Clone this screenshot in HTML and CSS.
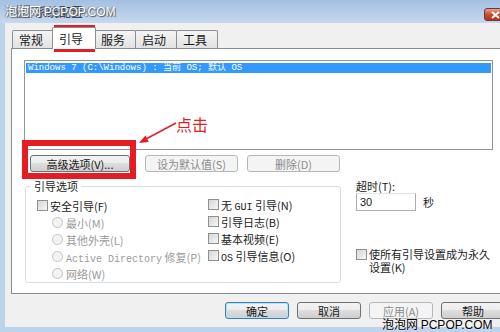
FILE: index.html
```html
<!DOCTYPE html>
<html lang="zh-CN">
<head>
    <meta charset="UTF-8">
    <title>系统配置</title>
    <link rel="stylesheet" href="styles.css">
</head>
<body>
    <div class="window">
        <div class="titlebar">
            <span class="app-icon"></span>
            <span class="title">系统配置</span>
            <span class="close">
                <svg width="9" height="8" viewBox="0 0 9 8"><path d="M1 1 L8 7 M8 1 L1 7" stroke="#fff" stroke-width="2"/></svg>
            </span>
        </div>
        <div class="frame">
            <div class="tabs">
                <div class="tab">常规</div>
                <div class="tab active">引导</div>
                <div class="tab">服务</div>
                <div class="tab">启动</div>
                <div class="tab">工具</div>
            </div>
            <div class="panel">
                <div class="listbox">
                    <div class="item selected">Windows 7 (C:\Windows) : 当前 OS; 默认 OS</div>
                </div>
                <div class="btn-row">
                    <button class="btn advanced">高级选项(<u>V</u>)...</button>
                    <button class="btn set-default" disabled>设为默认值(<u>S</u>)</button>
                    <button class="btn delete" disabled>删除(<u>D</u>)</button>
                </div>
                <div class="options">
                    <fieldset class="group">
                        <legend>引导选项</legend>
                        <div class="group-cols">
                            <div class="col col-left">
                                <div class="row"><span class="box"></span><span>安全引导(<u>F</u>)</span></div>
                                <div class="row sub off"><span class="dot"></span><span>最小(<u>M</u>)</span></div>
                                <div class="row sub off"><span class="dot"></span><span>其他外壳(<u>L</u>)</span></div>
                                <div class="row sub off"><span class="dot"></span><span><span class="mono">Active Directory</span> 修复(<u>P</u>)</span></div>
                                <div class="row sub off"><span class="dot"></span><span>网络(<u>W</u>)</span></div>
                            </div>
                            <div class="col col-right">
                                <div class="row"><span class="box"></span><span>无 <span class="mono">GUI</span> 引导(<u>N</u>)</span></div>
                                <div class="row"><span class="box"></span><span>引导日志(<u>B</u>)</span></div>
                                <div class="row"><span class="box"></span><span>基本视频(<u>E</u>)</span></div>
                                <div class="row"><span class="box"></span><span><span class="mono">OS</span> 引导信息(<u>O</u>)</span></div>
                            </div>
                        </div>
                    </fieldset>
                    <div class="side">
                        <div class="timeout-label">超时(<u>T</u>):</div>
                        <div class="timeout">
                            <span class="input">30</span>
                            <span>秒</span>
                        </div>
                        <div class="permanent">
                            <span class="box"></span>
                            <span>使所有引导设置成为永久<br>设置(<u>K</u>)</span>
                        </div>
                    </div>
                </div>
            </div>
            <div class="footer">
                <button class="btn ok">确定</button>
                <button class="btn">取消</button>
                <button class="btn" disabled>应用(<u>A</u>)</button>
                <button class="btn">帮助</button>
            </div>
        </div>

        <div class="mark mark-top">泡泡网 <span class="latin">PCPOP.COM</span></div>
        <div class="mark mark-bottom">泡泡网 <span class="latin">PCPOP.COM</span></div>

        <div class="hl hl-tab"></div>
        <div class="hl hl-btn"></div>
        <svg class="arrow" width="500" height="332" viewBox="0 0 500 332">
            <line x1="176" y1="123" x2="146" y2="139" stroke="#e51c23" stroke-width="1.5"/>
            <polygon points="139,143 145.4,135.5 148.8,142" fill="#e51c23"/>
        </svg>
        <div class="note">点击</div>
    </div>
</body>
</html>
```

FILE: styles.css
```css
body {
    margin: 0;
    font-family: "Noto Sans CJK SC", sans-serif;
    font-size: 11px;
    color: #1b1b1b;
}
.window {
    position: relative;
    width: 500px;
    height: 332px;
    overflow: hidden;
    display: flex;
    flex-direction: column;
    background: #f0f0f0;
}
.titlebar {
    height: 23px;
    flex: none;
    display: flex;
    align-items: center;
    padding-left: 17px;
    background: linear-gradient(#a4c0e1, #c5d9ef);
}
.app-icon {
    width: 11px;
    height: 11px;
    border: 1px solid #6b7f96;
    background: linear-gradient(#dfe8f2, #8fa6c0);
}
.title {
    margin-left: 5px;
    font-size: 12px;
    line-height: 14px;
    color: #1e2a3a;
}
.close {
    margin-left: auto;
    margin-right: -12px;
    align-self: flex-start;
    margin-top: 8px;
    width: 28px;
    height: 13px;
    display: flex;
    align-items: center;
    padding-left: 6px;
    box-sizing: border-box;
    border: 1px solid #6d3a35;
    border-radius: 3px;
    background: linear-gradient(#e7a293, #cc4b35 50%, #b7321d);
}
.frame {
    flex: 1;
    min-height: 0;
    display: flex;
    flex-direction: column;
    border-left: 5px solid #bcd3ec;
    border-bottom: 5px solid #bcd3ec;
}
.tabs {
    height: 25px;
    flex: none;
    display: flex;
    align-items: flex-end;
    padding-left: 7px;
}
.tab {
    width: 42px;
    height: 18px;
    box-sizing: border-box;
    margin-right: -1px;
    padding-left: 6px;
    border: 1px solid #8c8e94;
    border-bottom: none;
    border-radius: 2px 2px 0 0;
    background: linear-gradient(#f4f4f4, #e2e2e2);
    font-size: 12px;
    line-height: 17px;
}
.tab.active {
    position: relative;
    z-index: 1;
    width: 44px;
    height: 22px;
    margin: 0 -2px -1px -1px;
    background: #fff;
    padding-top: 2px;
}
.panel {
    flex: none;
    height: 246px;
    box-sizing: border-box;
    margin-left: 6px;
    margin-right: -30px;
    border: 1px solid #898c95;
    background: #fff;
}
.listbox {
    width: 469px;
    height: 90px;
    box-sizing: border-box;
    margin: 11px 0 0 12px;
    padding: 2px 1px 0 1px;
    border: 1px solid #8f939a;
}
.item {
    height: 10px;
    line-height: 10px;
    padding-left: 2px;
    font-family: "Liberation Mono", "Noto Sans CJK SC", monospace;
    font-size: 9px;
    white-space: nowrap;
}
.item.selected {
    background: #3399ff;
    color: #fff;
}
.btn-row {
    display: flex;
    margin: 5px 0 0 18px;
}
.btn {
    height: 17px;
    padding: 0;
    box-sizing: border-box;
    border: 1px solid #707070;
    border-radius: 3px;
    background: linear-gradient(#f3f3f3, #ececec 50%, #dddddd 50%, #cfcfcf);
    font-family: "Noto Sans CJK SC", sans-serif;
    font-size: 11px;
    line-height: 14px;
    color: #1b1b1b;
}
.btn:disabled {
    border-color: #b4b8bb;
    background: #f4f4f4;
    color: #8a8a8a;
}
.btn u {
    text-decoration: none;
}
.advanced {
    width: 100px;
}
.set-default {
    width: 93px;
    margin-left: 15px;
}
.delete {
    width: 93px;
    margin-left: 9px;
}
.options {
    display: flex;
    margin: 7px 0 0 13px;
}
.group {
    width: 316px;
    height: 104px;
    box-sizing: border-box;
    margin: 0;
    padding: 0 0 0 5px;
    border: 1px solid #d5dfe5;
    border-radius: 3px;
}
.group legend {
    padding: 0 3px;
    line-height: 14px;
}
.group-cols {
    display: flex;
    margin-top: 4px;
}
.col-left {
    width: 171px;
    margin-left: 6px;
}
.col-right {
    margin-top: -1px;
}
.row {
    height: 17px;
    display: flex;
    align-items: center;
    white-space: nowrap;
}
.row u, .side u {
    text-decoration: none;
}
.sub {
    padding-left: 15px;
}
.off {
    color: #9a9a9a;
}
.mono {
    font-family: "Liberation Mono", monospace;
    font-size: 10px;
}
.box {
    width: 11px;
    height: 11px;
    box-sizing: border-box;
    flex: none;
    margin-right: 2px;
    border: 1px solid #8e8f8f;
    background: linear-gradient(135deg, #d6d6d6, #f7f7f7);
}
.dot {
    width: 11px;
    height: 11px;
    box-sizing: border-box;
    flex: none;
    margin-right: 3px;
    border: 1px solid #c3c3c3;
    border-radius: 50%;
    background: #f3f3f3;
}
.side {
    margin-left: 15px;
}
.timeout-label {
    line-height: 14px;
}
.timeout {
    display: flex;
    align-items: center;
    gap: 7px;
}
.input {
    width: 60px;
    height: 18px;
    box-sizing: border-box;
    padding-left: 3px;
    border: 1px solid #abadb3;
    border-top-color: #e3e3e3;
    font-family: "Liberation Sans", sans-serif;
    line-height: 16px;
}
.permanent {
    display: flex;
    align-items: flex-start;
    margin-top: 37px;
    line-height: 13px;
}
.permanent .box {
    margin-top: 1px;
}
.footer {
    flex: 1;
    display: flex;
    gap: 8px;
    padding: 8px 0 0 220px;
}
.footer .btn {
    width: 64px;
    flex: none;
}
.footer .ok {
    border-color: #3c7fb1;
    box-shadow: inset 0 0 0 1px #aee3fb;
}
.mark {
    position: absolute;
    white-space: nowrap;
    font-size: 12px;
    line-height: 14px;
}
.mark .latin {
    font-family: "Liberation Sans", sans-serif;
}
.mark-top {
    left: 5px;
    top: 4px;
    color: #fff;
    text-shadow: 1px 1px 1px #555, -1px 0 1px #777;
}
.mark-bottom {
    left: 382px;
    top: 317px;
    color: #000;
    text-shadow: 0 0 2px #fff;
}
.hl {
    position: absolute;
    border-style: solid;
    border-color: #e51c23;
}
.hl-tab {
    left: 54px;
    top: 25px;
    width: 35px;
    height: 21px;
    border-width: 3px;
}
.hl-btn {
    left: 22px;
    top: 140px;
    width: 102px;
    height: 27px;
    border-width: 6px;
}
.arrow {
    position: absolute;
    left: 0;
    top: 0;
}
.note {
    position: absolute;
    left: 176px;
    top: 114px;
    color: #e51c23;
    font-size: 16px;
    line-height: 20px;
}
```
